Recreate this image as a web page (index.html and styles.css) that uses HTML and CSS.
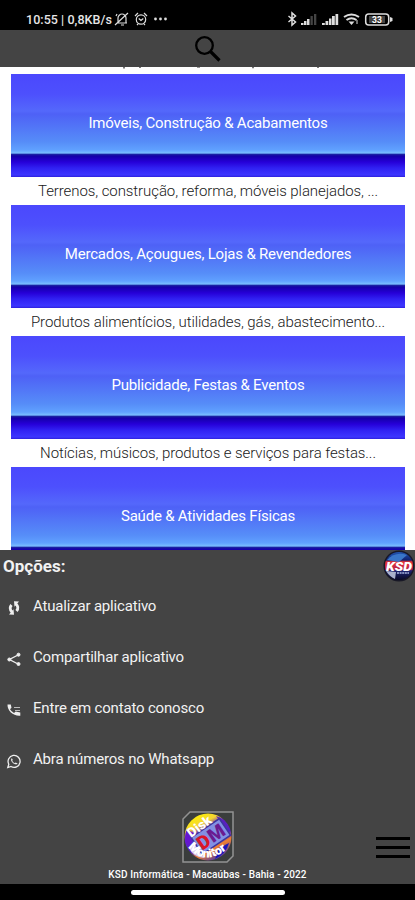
FILE: index.html
```html
<!DOCTYPE html>
<html lang="pt-BR">
<head>
<meta charset="utf-8">
<title>Disk Monitor</title>
<link rel="stylesheet" href="styles.css">
</head>
<body>
<div class="phone">
  <div class="status">
    <span class="status-time">10:55 | 0,8KB/s</span>
    <svg class="status-left" width="56" height="16" viewBox="0 0 56 16" fill="none" stroke="#ddd" stroke-width="1.2">
      <path d="M3 12h10M4 11V7c0-2 2-4 4-4s4 2 4 4v5M1 14L14 2M7 14h3M2 5l1-2"/>
      <circle cx="27" cy="8.5" r="4.7"/><path d="M21 5l3-3M33 5l-3-3M24.7 7.5l2.3 2 2.3-2M23 14l1-1M31 14l-1-1"/>
      <g fill="#ddd" stroke="none"><circle cx="41.500" cy="8" r="1.4"/><circle cx="46.500" cy="8" r="1.4"/><circle cx="51.500" cy="8" r="1.4"/></g>
    </svg>
    <svg class="status-right" width="108" height="16" viewBox="0 0 108 16" fill="none">
      <path d="M2.500 5l7 6-3.500 3V2l3.500 3-7 6" stroke="#ddd" stroke-width="1.500"/>
      <path d="M15 14v-2h2.500v2zM18 14v-4h2.500v4zM21 14V8h2.500v6z" fill="#ddd"/><path d="M24.500 14V5h2.300v9zM28 14V3h2.300v11z" fill="#444"/>
      <path d="M36 14v-2h2.800v2zM39.500 14v-4h2.800v4zM43 14V7.500h2.500V14zM46 14V5h2.800v9zM49.500 14V3h2.700v11z" fill="#ddd"/>
      <path d="M58 6q7.500-5 15 0M60.500 9q5-3.500 10 0" stroke="#ddd" stroke-width="2"/><path d="M62.500 10.500h6L65.500 14z" fill="#ddd"/><path d="M71 9v4" stroke="#ddd"/>
      <rect x="79.700" y="3" width="23" height="11" rx="3" stroke="#ddd" stroke-width="1.500"/><path d="M104 6l2.500 1v3l-2.500 1z" fill="#ddd"/><path d="M83 5h16v7H83z" fill="#444"/>
      <text class="battery-text" x="91" y="11.800" text-anchor="middle">33</text>
    </svg>
  </div>
  <header class="topbar">
    <svg width="30" height="30" viewBox="0 0 30 30" fill="none" stroke="#000"><circle cx="11.500" cy="11.500" r="8.300" stroke-width="2.300"/><path d="M17.500 17.500l9 9" stroke-width="3.200"/></svg>
  </header>
  <main class="list">
    <svg class="clipped" width="415" height="2" viewBox="0 0 415 2" fill="#777"><path d="M123 0h2v1.500h-2zM139 0h2v1h-2zM197 0h3v.8h-3zM252 0h2v1.200h-2zM317 0h2v1h-2z"/></svg>
    <button class="card">Imóveis, Construção &amp; Acabamentos</button>
    <p class="caption">Terrenos, construção, reforma, móveis planejados, ...</p>
    <button class="card">Mercados, Açougues, Lojas &amp; Revendedores</button>
    <p class="caption">Produtos alimentícios, utilidades, gás, abastecimento...</p>
    <button class="card">Publicidade, Festas &amp; Eventos</button>
    <p class="caption">Notícias, músicos, produtos e serviços para festas...</p>
    <button class="card">Saúde &amp; Atividades Físicas</button>
  </main>
  <section class="panel">
    <h2 class="panel-title">Opções:</h2>
    <svg class="ksd" width="32" height="32" viewBox="0 0 32 32">
      <defs><linearGradient id="kg" x2="0" y2="1"><stop offset="0" stop-color="#245cb8"/><stop offset=".3" stop-color="#102070"/><stop offset=".36" stop-color="#e33"/><stop offset=".62" stop-color="#b22350"/><stop offset=".66" stop-color="#1c2470"/><stop offset="1" stop-color="#080820"/></linearGradient></defs>
      <circle cx="16" cy="16" r="14.800" fill="url(#kg)" stroke="#181826" stroke-width="1.400"/>
      <path d="M4 10Q12 1 24 5L16 12z" fill="#3976c8"/><path d="M3 21q4 6 9 8l1-7z" fill="#aab2cc"/>
      <text class="ksd-text" x="16" y="20.500" text-anchor="middle" textLength="26" lengthAdjust="spacingAndGlyphs">KSD</text>
      <path d="M14 23h12" stroke="#a8b4e0" stroke-width="1.500" stroke-dasharray="2 .6"/>
    </svg>
    <ul class="menu">
      <li><svg width="16" height="16" viewBox="0 0 16 16" fill="none" stroke="#eee"><path d="M5.500 5c-2.500 3-1.500 5 .5 7M10.500 11c2.500-3 1.500-5-.5-7" stroke-width="2.800"/><path d="M3 14.500l5 .2-.5-5.500zM13 1.500l-5-.2.500 5.500z" fill="#eee" stroke="none"/></svg><span>Atualizar aplicativo</span></li>
      <li><svg width="16" height="16" viewBox="0 0 16 16" fill="#eee" stroke="#eee"><path d="M13 3.500L3.500 8.500l9.500 5" fill="none" stroke-width="1.400"/><circle cx="12.500" cy="3.700" r="1.500"/><circle cx="3.300" cy="8.500" r="1.500"/><circle cx="12.500" cy="13" r="1.500"/></svg><span>Compartilhar aplicativo</span></li>
      <li><svg width="16" height="16" viewBox="0 0 16 16"><path d="M1.500 2.500h3.300l.7 3.200-1.500 1.500q1.500 2.500 4 3.800l1.700-1.500 4.600.9v3.300C7.500 14.300 1.200 9 1.500 2.500z" fill="#eee"/><path d="M8 5.500h6M9 8.500h5" stroke="#bbb"/></svg><span>Entre em contato conosco</span></li>
      <li><svg width="16" height="16" viewBox="0 0 16 16" fill="none" stroke="#eee" stroke-width="1.300"><path d="M1.800 14.500l1-3.300A6 6 0 1 1 5 13.500z"/><path d="M5.800 5l1 2-.7.800q1 1.700 2.700 2.500l.8-.9 2 1c-1 2.500-6.500-.5-6.600-3.700z" fill="#eee" stroke="none"/></svg><span>Abra números no Whatsapp</span></li>
    </ul>
    <footer class="footer">
      <svg class="logo" width="54" height="54" viewBox="0 0 54 54">
        <defs>
          <linearGradient id="dg" x1=".25" y1="0" x2=".8" y2="1"><stop offset="0" stop-color="#fff200"/><stop offset=".22" stop-color="#f3d434"/><stop offset=".35" stop-color="#6424c8"/><stop offset=".58" stop-color="#4921c8"/><stop offset=".72" stop-color="#f08030"/><stop offset="1" stop-color="#2525c4"/></linearGradient>
          <path id="arcBottom" d="M7 37Q24 58 49 37"/>
        </defs>
        <path d="M9 2H52V46l-6 6H2V9z" fill="#3a3d3c" stroke="#929292" stroke-width="1.500"/>
        <circle cx="27" cy="27" r="23.500" fill="url(#dg)"/>
        <path d="M4 27q0-4 2-8l10 6-9 11q-3-3-3-9z" fill="#6516d0"/><path d="M35 6q10 3 14 14l-8-6z" fill="#5a20c0"/><path d="M8 38l7-4 8 14Q12 47 8 38z" fill="#d9cdf0"/><path d="M38 38l10-5q-3 11-14 16z" fill="#1717bc"/>
        <g transform="rotate(-34 29 27)"><rect x="13" y="17" width="34" height="20" fill="#8290e4" stroke="#3c35a0" stroke-width="1.500"/><text class="dm" y="34"><tspan class="dm-d" x="15">D</tspan><tspan class="dm-m" x="28">M</tspan></text></g>
        <text class="disk" transform="translate(10 28) rotate(-36)" textLength="27" lengthAdjust="spacingAndGlyphs">Disk</text>
        <text class="monitor"><textPath href="#arcBottom" textLength="44" lengthAdjust="spacingAndGlyphs">Monitor</textPath></text>
      </svg>
      <p class="copy">KSD Informática - Macaúbas - Bahia - 2022</p>
      <div class="burger"><i></i><i></i><i></i></div>
    </footer>
  </section>
  <div class="navbar"><div class="handle"></div></div>
</div>
</body>
</html>
```
FILE: styles.css
```css
* { box-sizing: border-box; }
body { margin: 0; background: #000; font-family: Roboto, sans-serif; }
.phone { width: 415px; height: 900px; display: flex; flex-direction: column; overflow: hidden; }
.status { height: 30px; background: #000; color: #e6e6e6; display: flex; align-items: center; padding: 8px 20px 0 26px; }
.status-time { font-size: 12.5px; font-weight: 500; white-space: pre; width: 87px; letter-spacing: .05px; }
.status-left { margin-left: 1px; }
.status-right { margin-left: auto; margin-right: 1px; }
.battery-text { font: 700 8.5px Roboto, sans-serif; fill: #fff; }
.topbar { height: 37px; background: #444; display: flex; justify-content: center; padding: 4px 0 0; }
.list { height: 483px; background: #fff; overflow: hidden; padding: 0 10px 0 11px; display: flex; flex-direction: column; }
.clipped { flex: none; margin: 0 0 5px -11px; }
.card { flex: none; height: 103px; border: 0; padding: 0 0 5px; font: 400 15px Roboto, sans-serif; letter-spacing: -.2px; color: #fff;
  background: linear-gradient(#4b48fd 0, #4d50fd 20px, #5468fb 37px, #4e61f6 40px, #568df8 68px, #60a1ff 76px, #79bdff 79px, #1a20a4 80.500px, #1400a8 82px, #2600d8 88px, #3021f2 94px, #3d36ff 101px, #2e20dc 103px); }
.caption { flex: none; height: 28px; margin: 0; text-align: center; font-size: 15px; line-height: 28px; letter-spacing: -.08px; color: #202020; font-weight: 300; white-space: nowrap; }
.panel { height: 334px; background: #444; color: #f2f2f2; position: relative; display: flex; flex-direction: column; }
.panel-title { margin: 0; padding: 6px 0 0 3px; font-size: 17px; line-height: 21px; font-weight: 700; height: 30px; }
.ksd { position: absolute; right: 0; top: 0; }
.ksd-text { font: italic 900 13px Roboto, sans-serif; fill: #fff; }
.menu { list-style: none; margin: 0; padding: 0 0 0 6px; }
.menu li { height: 51.2px; display: flex; align-items: center; gap: 11px; font-size: 15px; letter-spacing: -.18px; }
.menu svg { margin-top: 4px; }
.footer { flex: 1; display: flex; flex-direction: column; align-items: center; position: relative; padding-top: 25px; }
.logo { display: block; flex: none; }
.dm { font: 900 19px Roboto, sans-serif; }
.dm-d { fill: #d91528; }
.dm-m { fill: #6a1b90; }
.disk { font: 900 13px Roboto, sans-serif; fill: #fff; }
.monitor { font: 900 12px Roboto, sans-serif; fill: #fff; }
.copy { margin: 4px 0 0; font-size: 10px; line-height: 14px; letter-spacing: .14px; color: #fff; white-space: nowrap; font-weight: 500; }
.burger { position: absolute; right: 5px; bottom: 26px; width: 34px; display: flex; flex-direction: column; gap: 6px; }
.burger i { height: 3px; background: #000; }
.navbar { height: 16px; background: #000; display: flex; justify-content: center; padding-top: 5.5px; }
.handle { width: 154px; height: 5px; border-radius: 2.5px; background: #fff; }
```
